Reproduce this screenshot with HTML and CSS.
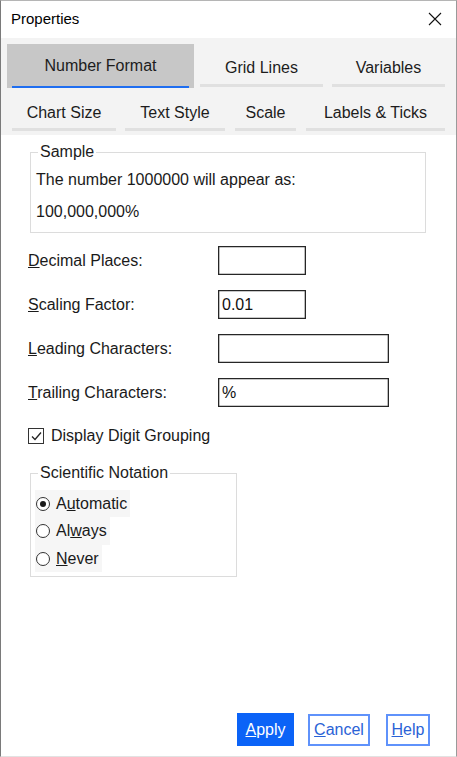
FILE: index.html
```html
<!DOCTYPE html>
<html>
<head>
<meta charset="utf-8">
<title>Properties</title>
<link rel="stylesheet" href="styles.css">
</head>
<body>
<div class="window">
  <div class="titlebar">
    <span class="title">Properties</span>
    <svg class="close" width="14" height="14" viewBox="0 0 14 14"><path d="M1 1 L13 13 M13 1 L1 13" stroke="#111" stroke-width="1.1" fill="none"/></svg>
  </div>
  <div class="tabs">
    <div class="tab-row row1">
      <div class="tab selected t-number"><span class="tab-text">Number Format</span><span class="indicator"></span></div>
      <div class="tab t-grid"><span class="tab-text">Grid Lines</span><span class="bar"></span></div>
      <div class="tab t-vars"><span class="tab-text">Variables</span><span class="bar"></span></div>
    </div>
    <div class="tab-row row2">
      <div class="tab t-chart"><span class="tab-text">Chart Size</span><span class="bar"></span></div>
      <div class="tab t-text"><span class="tab-text">Text Style</span><span class="bar"></span></div>
      <div class="tab t-scale"><span class="tab-text">Scale</span><span class="bar"></span></div>
      <div class="tab t-labels"><span class="tab-text">Labels &amp; Ticks</span><span class="bar"></span></div>
    </div>
  </div>
  <div class="content">
    <fieldset class="group sample">
      <legend>Sample</legend>
      <div class="sample-line first">The number 1000000 will appear as:</div>
      <div class="sample-line second">100,000,000%</div>
    </fieldset>

    <div class="form-row first-row">
      <label class="field-label"><u>D</u>ecimal Places:</label>
      <div class="input short"></div>
    </div>
    <div class="form-row">
      <label class="field-label"><u>S</u>caling Factor:</label>
      <div class="input short">0.01</div>
    </div>
    <div class="form-row">
      <label class="field-label"><u>L</u>eading Characters:</label>
      <div class="input long"></div>
    </div>
    <div class="form-row">
      <label class="field-label"><u>T</u>railing Characters:</label>
      <div class="input long">%</div>
    </div>

    <div class="check-row">
      <span class="checkbox">
        <svg width="13" height="13" viewBox="0 0 13 13"><path d="M2 6.5 L5 9.5 L11 2.5" stroke="#222" stroke-width="1.3" fill="none"/></svg>
      </span>
      <span class="check-label">Display Di<u>g</u>it Grouping</span>
    </div>

    <fieldset class="group sci">
      <legend>Scientific Notation</legend>
      <div class="radio-row"><span class="radio checked"></span><span>A<u>u</u>tomatic</span></div>
      <div class="radio-row mid"><span class="radio"></span><span>Al<u>w</u>ays</span></div>
      <div class="radio-row"><span class="radio"></span><span><u>N</u>ever</span></div>
    </fieldset>

    <div class="spacer"></div>

    <div class="footer">
      <button class="btn primary"><u>A</u>pply</button>
      <button class="btn outline cancel"><u>C</u>ancel</button>
      <button class="btn outline help"><u>H</u>elp</button>
    </div>
  </div>
</div>
</body>
</html>
```
FILE: styles.css
```css
html, body {
  margin: 0;
  padding: 0;
  background: #f0f0f0;
}

body {
  font-family: "Liberation Sans", Arial, sans-serif;
  font-size: 16px;
  color: #1a1a1a;
}

.window {
  box-sizing: border-box;
  width: 457px;
  height: 757px;
  border-left: 1px solid #7a7a7a;
  border-right: 1px solid #9a9a9a;
  border-top: 1px solid #b5b5b5;
  border-bottom: 1px solid #e2e2e2;
  background: #ffffff;
  display: flex;
  flex-direction: column;
}

.titlebar {
  height: 37px;
  display: flex;
  align-items: center;
  padding-left: 10px;
  padding-right: 14px;
  background: #ffffff;
}

.title {
  font-size: 15px;
  color: #000;
  flex: 1;
  margin-top: -2px;
}

.close {
  display: block;
  margin-top: -1px;
}

.tabs {
  background: #f3f3f3;
  padding: 6px 0 4px 0;
}

.tab-row {
  display: flex;
}

.tab {
  display: flex;
  flex-direction: column;
  align-items: center;
  position: relative;
}

.row1 .tab {
  height: 44px;
  padding-top: 14px;
  box-sizing: border-box;
}

.row2 .tab {
  padding-top: 15px;
}

.tab-text {
  line-height: 20px;
  white-space: nowrap;
  color: #1c1c1c;
}

.bar {
  display: block;
  width: 100%;
  height: 3px;
  background: #e0e0e0;
  margin-top: 6px;
}

.row2 .bar {
  margin-top: 5px;
}

.tab.selected {
  background: #c7c7c7;
  padding-top: 12px;
}

.indicator {
  position: absolute;
  left: 5px;
  right: 5px;
  bottom: 0;
  height: 2px;
  background: #1f6ef0;
}

.t-number { margin-left: 6px; width: 187px; }
.t-grid { margin-left: 6px; width: 123px; }
.t-vars { margin-left: 9px; width: 113px; }
.t-chart { margin-left: 11px; width: 104px; }
.t-text { margin-left: 9px; width: 100px; }
.t-scale { margin-left: 10px; width: 61px; }
.t-labels { margin-left: 10px; width: 139px; }

.content {
  flex: 1;
  display: flex;
  flex-direction: column;
  background: #ffffff;
}

.group {
  margin: 0;
  border: 1px solid #dcdcdc;
  padding: 0 5px;
  min-width: 0;
}

.group legend {
  margin-left: 2px;
  padding: 0 2px;
  line-height: 18px;
  color: #1c1c1c;
}

.sample {
  margin-left: 29px;
  width: 396px;
  box-sizing: border-box;
  margin-top: 8px;
  padding-bottom: 10px;
}

.sample-line {
  line-height: 20px;
}

.sample-line.first {
  margin-top: 9px;
}

.sample-line.second {
  margin-top: 12px;
}

.form-row {
  display: flex;
  align-items: center;
  height: 29px;
  margin-top: 15px;
  padding-left: 27px;
}

.form-row.first-row {
  margin-top: 13px;
}

.field-label {
  width: 190px;
  line-height: 20px;
}

.input {
  box-sizing: border-box;
  height: 29px;
  border: 1px solid #262626;
  box-shadow: inset 0 0 0 0.3px #262626;
  padding-left: 3px;
  line-height: 27px;
  color: #111;
}

.input.short { width: 88px; }
.input.long { width: 171px; }

.check-row {
  display: flex;
  align-items: center;
  margin-top: 19px;
  padding-left: 27px;
  height: 20px;
}

.checkbox {
  box-sizing: border-box;
  width: 16px;
  height: 16px;
  border: 1px solid #333;
  display: flex;
  align-items: center;
  justify-content: center;
  margin-right: 7px;
}

.checkbox svg {
  display: block;
}

.sci {
  margin-left: 29px;
  width: 207px;
  box-sizing: border-box;
  margin-top: 18px;
  padding: 8px 0 4px 4px;
}

.sci legend {
  margin-left: 3px;
}

.radio-row {
  display: flex;
  align-items: center;
  height: 27px;
  align-self: flex-start;
  width: fit-content;
  padding-right: 3px;
  background: #f6f6f6;
}

.radio-row.mid {
  height: 28px;
}

.radio {
  box-sizing: border-box;
  width: 14px;
  height: 14px;
  border: 1px solid #333;
  border-radius: 50%;
  margin-left: 1px;
  margin-right: 6px;
  display: flex;
  align-items: center;
  justify-content: center;
  background: #fff;
}

.radio.checked::after {
  content: "";
  width: 6px;
  height: 6px;
  border-radius: 50%;
  background: #1a1a1a;
}

.spacer {
  flex: 1;
}

.footer {
  display: flex;
  justify-content: flex-end;
  align-items: center;
  padding-right: 26px;
  padding-bottom: 10px;
  gap: 14px;
}

.btn {
  font-family: "Liberation Sans", Arial, sans-serif;
  font-size: 16px;
  box-sizing: border-box;
  margin: 0;
  padding: 0;
  cursor: default;
}

.primary {
  width: 57px;
  height: 33px;
  background: #0b63f7;
  color: #ffffff;
  border: none;
}

.outline {
  height: 32px;
  background: #ffffff;
  color: #2a62d6;
  border: 2px solid #5f92fb;
}

.cancel { width: 62px; }
.help { width: 44px; margin-left: 2px; }
```
